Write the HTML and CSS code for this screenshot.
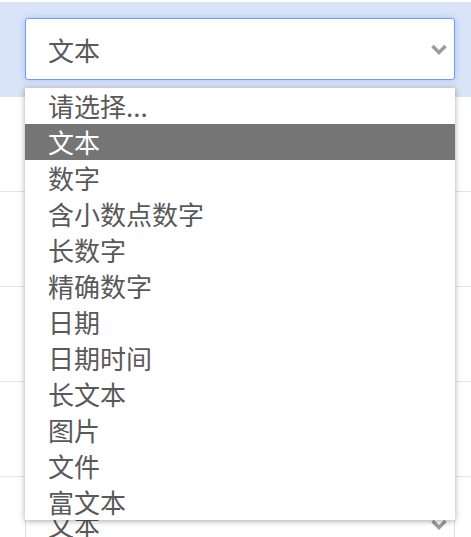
FILE: index.html
```html
<!DOCTYPE html>
<html lang="zh-CN">
<head>
    <meta charset="UTF-8">
    <meta name="viewport" content="width=device-width, initial-scale=1.0">
    <title>字段类型</title>
    <link rel="stylesheet" href="styles.css">
</head>
<body>

    <div class="field-table">
        <div class="field-row active">
            <div class="type-select focused">
                <span class="value">文本</span>
                <svg class="chevron" width="16" height="11" viewBox="0 0 16 11">
                    <polyline points="1.5,2 8,8.5 14.5,2" fill="none" stroke="#9c9c9c" stroke-width="3.5"/>
                </svg>

                <ul class="type-list">
                    <li>请选择...</li>
                    <li class="hover">文本</li>
                    <li>数字</li>
                    <li>含小数点数字</li>
                    <li>长数字</li>
                    <li>精确数字</li>
                    <li>日期</li>
                    <li>日期时间</li>
                    <li>长文本</li>
                    <li>图片</li>
                    <li>文件</li>
                    <li>富文本</li>
                </ul>
            </div>
        </div>

        <div class="field-row">
            <div class="type-select">
                <span class="value">数字</span>
                <svg class="chevron" width="16" height="11" viewBox="0 0 16 11">
                    <polyline points="1.5,2 8,8.5 14.5,2" fill="none" stroke="#9c9c9c" stroke-width="3.5"/>
                </svg>
            </div>
        </div>

        <div class="field-row">
            <div class="type-select">
                <span class="value">日期</span>
                <svg class="chevron" width="16" height="11" viewBox="0 0 16 11">
                    <polyline points="1.5,2 8,8.5 14.5,2" fill="none" stroke="#9c9c9c" stroke-width="3.5"/>
                </svg>
            </div>
        </div>

        <div class="field-row">
            <div class="type-select">
                <span class="value">文本</span>
                <svg class="chevron" width="16" height="11" viewBox="0 0 16 11">
                    <polyline points="1.5,2 8,8.5 14.5,2" fill="none" stroke="#9c9c9c" stroke-width="3.5"/>
                </svg>
            </div>
        </div>

        <div class="field-row">
            <div class="type-select">
                <span class="value">图片</span>
                <svg class="chevron" width="16" height="11" viewBox="0 0 16 11">
                    <polyline points="1.5,2 8,8.5 14.5,2" fill="none" stroke="#9c9c9c" stroke-width="3.5"/>
                </svg>
            </div>
        </div>

        <div class="field-row">
            <div class="type-select">
                <span class="value">文本</span>
                <svg class="chevron" width="16" height="11" viewBox="0 0 16 11">
                    <polyline points="1.5,2 8,8.5 14.5,2" fill="none" stroke="#9c9c9c" stroke-width="3.5"/>
                </svg>
            </div>
        </div>
    </div>

</body>
</html>
```

FILE: styles.css
```css
* {
    box-sizing: border-box;
    margin: 0;
    padding: 0;
    font-family: "Noto Sans CJK SC", "Noto Sans", sans-serif;
}

html {
    overflow: hidden;
}

body {
    background: white;
}

.field-table {
    padding-top: 2px;
}

.field-row {
    height: 95px;
    padding: 16px 16px 0 25px;
    border-bottom: 1px solid #e1e6f0;
}

.field-row.active {
    background: #d9e4f8;
    border-bottom: none;
}

.type-select {
    position: relative;
    height: 62px;
    display: flex;
    align-items: center;
    justify-content: space-between;
    padding: 0 7px 0 22px;
    background: white;
    border: 1px solid #d6dce8;
    border-radius: 3px;
    color: #595959;
    font-size: 26px;
}

.type-select.focused {
    border-color: #6b9ff6;
    box-shadow: 0 0 6px rgba(110, 150, 240, 0.45);
}

.type-list {
    position: absolute;
    top: 69px;
    left: -1px;
    right: -1px;
    list-style: none;
    background: white;
    box-shadow: 0 1px 6px rgba(0, 0, 0, 0.35);
    z-index: 10;
}

.type-list li {
    height: 36px;
    line-height: 36px;
    padding-left: 23px;
    color: #595959;
    font-size: 26px;
}

.type-list li.hover {
    background: #757575;
    color: white;
}
```
